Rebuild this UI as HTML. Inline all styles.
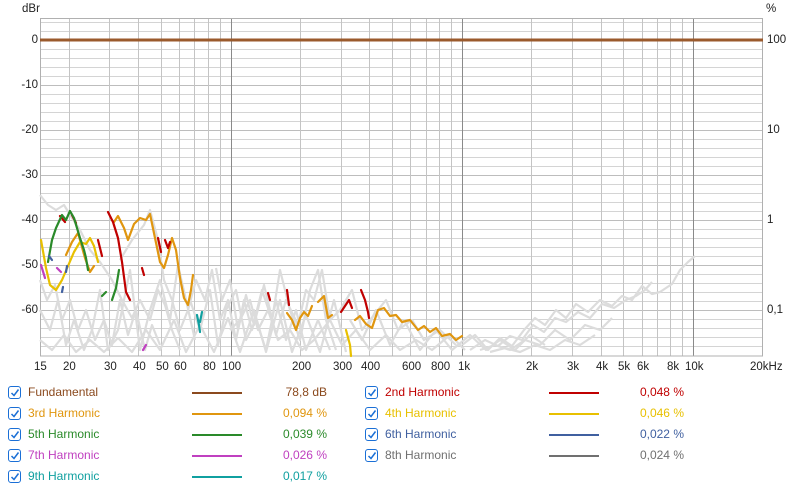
<!DOCTYPE html>
<html><head><meta charset="utf-8"><style>
body{margin:0;width:800px;height:492px;background:#fff;font-family:"Liberation Sans",sans-serif;overflow:hidden;position:relative}
.t{position:absolute;font-size:11.5px;color:#222}
.lg{position:absolute;font-size:12px;height:16px;line-height:16px}
.cb{position:absolute;width:11px;height:11px;border:1.3px solid #1a6fd6;border-radius:3px;background:#fff}
.cb svg{position:absolute;left:1px;top:1px}
.ln{position:absolute;height:2px}
</style></head><body>
<svg width="800" height="492" style="position:absolute;left:0;top:0">
<g stroke="#d4d4d4" stroke-width="1">
<line x1="40" x2="763" y1="22.5" y2="22.5"/><line x1="40" x2="763" y1="31.5" y2="31.5"/>
<line x1="40" x2="763" y1="49.5" y2="49.5"/><line x1="40" x2="763" y1="58.5" y2="58.5"/><line x1="40" x2="763" y1="67.5" y2="67.5"/><line x1="40" x2="763" y1="76.5" y2="76.5"/>
<line x1="40" x2="763" y1="94.5" y2="94.5"/><line x1="40" x2="763" y1="103.5" y2="103.5"/><line x1="40" x2="763" y1="112.5" y2="112.5"/><line x1="40" x2="763" y1="121.5" y2="121.5"/>
<line x1="40" x2="763" y1="139.5" y2="139.5"/><line x1="40" x2="763" y1="148.5" y2="148.5"/><line x1="40" x2="763" y1="157.5" y2="157.5"/><line x1="40" x2="763" y1="166.5" y2="166.5"/>
<line x1="40" x2="763" y1="184.5" y2="184.5"/><line x1="40" x2="763" y1="193.5" y2="193.5"/><line x1="40" x2="763" y1="202.5" y2="202.5"/><line x1="40" x2="763" y1="211.5" y2="211.5"/>
<line x1="40" x2="763" y1="229.5" y2="229.5"/><line x1="40" x2="763" y1="238.5" y2="238.5"/><line x1="40" x2="763" y1="247.5" y2="247.5"/><line x1="40" x2="763" y1="256.5" y2="256.5"/>
<line x1="40" x2="763" y1="274.5" y2="274.5"/><line x1="40" x2="763" y1="283.5" y2="283.5"/><line x1="40" x2="763" y1="292.5" y2="292.5"/><line x1="40" x2="763" y1="301.5" y2="301.5"/>
<line x1="40" x2="763" y1="319.5" y2="319.5"/><line x1="40" x2="763" y1="328.5" y2="328.5"/><line x1="40" x2="763" y1="337.5" y2="337.5"/><line x1="40" x2="763" y1="346.5" y2="346.5"/>
</g>
<g stroke="#bdbdbd" stroke-width="1">
<line x1="40" x2="763" y1="85.5" y2="85.5"/><line x1="40" x2="763" y1="130.5" y2="130.5"/><line x1="40" x2="763" y1="175.5" y2="175.5"/><line x1="40" x2="763" y1="220.5" y2="220.5"/><line x1="40" x2="763" y1="265.5" y2="265.5"/><line x1="40" x2="763" y1="310.5" y2="310.5"/>
</g>
<g stroke="#c4c4c4" stroke-width="1">
<line x1="69.5" x2="69.5" y1="18" y2="356"/><line x1="109.5" x2="109.5" y1="18" y2="356"/><line x1="138.5" x2="138.5" y1="18" y2="356"/><line x1="161.5" x2="161.5" y1="18" y2="356"/><line x1="179.5" x2="179.5" y1="18" y2="356"/><line x1="194.5" x2="194.5" y1="18" y2="356"/><line x1="208.5" x2="208.5" y1="18" y2="356"/><line x1="220.5" x2="220.5" y1="18" y2="356"/>
<line x1="300.5" x2="300.5" y1="18" y2="356"/><line x1="341.5" x2="341.5" y1="18" y2="356"/><line x1="369.5" x2="369.5" y1="18" y2="356"/><line x1="392.5" x2="392.5" y1="18" y2="356"/><line x1="410.5" x2="410.5" y1="18" y2="356"/><line x1="426.5" x2="426.5" y1="18" y2="356"/><line x1="439.5" x2="439.5" y1="18" y2="356"/><line x1="451.5" x2="451.5" y1="18" y2="356"/>
<line x1="531.5" x2="531.5" y1="18" y2="356"/><line x1="572.5" x2="572.5" y1="18" y2="356"/><line x1="601.5" x2="601.5" y1="18" y2="356"/><line x1="623.5" x2="623.5" y1="18" y2="356"/><line x1="642.5" x2="642.5" y1="18" y2="356"/><line x1="657.5" x2="657.5" y1="18" y2="356"/><line x1="670.5" x2="670.5" y1="18" y2="356"/><line x1="682.5" x2="682.5" y1="18" y2="356"/>
</g>
<g stroke="#8a8a8a" stroke-width="1"><line x1="231.5" x2="231.5" y1="18" y2="356"/><line x1="462.5" x2="462.5" y1="18" y2="356"/><line x1="693.5" x2="693.5" y1="18" y2="356"/></g>
<rect x="40.5" y="18.5" width="722" height="337.5" fill="none" stroke="#b0b0b0"/>
<line x1="40" x2="763" y1="40" y2="40" stroke="#9b5a2c" stroke-width="3"/>
<g fill="none" stroke="#dcdcdc" stroke-width="2.2" stroke-linejoin="round">
<path d="M40,195 L48,205 L56,210 L64,205 L72,218 L80,230 L90,250 L100,262 L112,280 L122,300 L132,318 L140,300 L150,320 L158,290 L165,305 L172,330 L180,350"/>
<path d="M40,280 L47,300 L55,285 L62,320 L70,300 L78,330 L86,310 L95,340 L104,320 L112,345 L120,300 L128,335 L136,310 L145,350 L152,325 L160,345"/>
<path d="M40,310 L50,330 L58,300 L66,345 L74,320 L84,350 L92,330 L100,290 L108,350 L118,330 L130,270 L140,350 L150,310 L160,280 L170,320 L178,265 L186,300 L195,340"/>
<path d="M120,260 L132,240 L144,225 L150,210 L158,240 L164,280 L172,300 L180,330 L188,310 L196,280 L205,300 L212,270 L220,320 L228,300 L236,340 L244,300 L252,330 L262,290 L272,320 L280,270 L290,310 L300,340 L310,290 L318,270 L326,320 L336,350"/>
<path d="M190,300 L200,330 L210,290 L218,345 L226,310 L236,290 L246,340 L256,320 L266,350 L276,300 L286,340 L296,310 L306,350 L318,320 L330,350"/>
<path d="M230,330 L240,320 L250,300 L258,330 L268,310 L278,340 L290,330 L302,350 L314,340 L330,320 L342,345 L356,330 L370,350 L386,335 L400,350 L416,340 L432,350 L450,335 L465,350"/>
<path d="M350,320 L362,340 L376,310 L390,345 L404,320 L420,350 L436,330 L452,350 L470,335 L486,350 L500,340 L515,350 L530,335 L545,345"/>
<path d="M40,340 L52,350 L64,335 L76,352 L90,340 L104,352 L118,338 L132,352 L146,330 L160,350 L174,320 L186,352 L200,325 L214,352 L228,318 L240,352 L254,310 L266,352 L280,300 L292,352 L306,315 L320,352 L334,300 L346,352"/>
<path d="M216,268 L222,300 L230,280 L238,330 L246,295 L254,325 L264,285 L276,335 L286,300 L298,325 L306,290 L314,300 L322,270 L330,320 L340,310 L352,290 L362,330 L374,315 L386,300 L398,330 L412,320 L424,340 L440,330 L456,345"/>
<path d="M462,345 L475,335 L488,350 L500,338 L512,346 L524,330 L535,318 L545,325 L556,310 L566,318 L576,304 L588,312 L600,300 L612,306 L622,296 L632,300 L642,286 L652,294 L660,292 L672,284 L680,270 L688,262 L695,256"/>
<path d="M470,350 L485,340 L498,346 L510,336 L522,340 L533,325 L544,332 L555,318 L566,322 L578,312 L590,318 L602,304 L614,308 L626,300 L636,296 L645,290 L652,282"/>
<path d="M480,350 L495,345 L510,350 L525,340 L540,345 L555,330 L570,340 L585,325 L600,330 L612,318"/>
<path d="M490,352 L505,348 L520,352 L535,345 L550,350 L565,340 L580,345 L595,335"/>
</g>
<g fill="none" stroke-width="2.2" stroke-linejoin="round" stroke-linecap="round">
<path stroke="#e0960f" d="M66,255 L72,242 L78,233 L80,240 L85,258 L90,272 L94,266"/>
<path stroke="#e0960f" d="M114,222 L118,216 L124,228 L128,240 L134,224 L140,218 L146,220 L150,214 L155,238 L160,262 L164,268 L168,255 L172,238 L176,250 L180,278 L184,298 L188,305 L191,290 L193,275"/>
<path stroke="#e0960f" d="M287,313 L292,320 L296,330 L300,318 L304,312 L308,316 L312,306"/>
<path stroke="#e0960f" d="M318,302 L324,296 L328,318 L332,315"/>
<path stroke="#e0960f" d="M355,320 L360,316 L366,324 L372,328 L378,310 L384,308 L390,316 L396,315 L402,322 L410,320 L418,330 L424,326 L430,332 L436,328 L442,336 L450,334 L456,340 L462,336"/>
<path stroke="#e8c000" d="M41,240 L46,268 L50,285 L56,290 L62,280 L68,266 L74,252 L80,242 L86,244 L90,238 L94,246 L98,262"/>
<path stroke="#e8c000" d="M346,330 L350,345 L351,356"/>
<path stroke="#c00000" d="M60,216 L65,222 M72,215 L76,223 M98,240 L102,256 M108,212 L113,222 L118,238 L122,262 L126,292 L130,300 M142,268 L144,275 M158,238 L161,252 M165,240 L168,248 L170,242"/>
<path stroke="#c00000" d="M268,293 L270,300 M287,290 L289,305 M341,312 L345,306 L349,300 L352,308 M361,290 L365,300 L368,312 L369,318"/>
<path stroke="#2a8a2a" d="M48,262 L52,240 L56,228 L62,215 L66,220 L70,211 L74,218 L77,228 L80,238 L84,250 L86,258 L88,270 M102,296 L106,292 M112,300 L116,288 L119,270"/>
<path stroke="#4060a0" d="M49,256 L52,260 M62,292 L63,287 M66,272 L67,266"/>
<path stroke="#c040c0" d="M41,265 L45,278 M57,268 L61,272 M143,350 L146,345"/>
<path stroke="#10a0a0" d="M197,315 L199,325 L200,332 M202,312 L200,322"/>
</g>
</svg>
<div class="t" style="left:22px;top:3px">dBr</div>
<div class="t" style="left:766px;top:3px">%</div>
<div class="t" style="left:0;width:38px;text-align:right;top:34px">0</div>
<div class="t" style="left:0;width:38px;text-align:right;top:79px">-10</div>
<div class="t" style="left:0;width:38px;text-align:right;top:124px">-20</div>
<div class="t" style="left:0;width:38px;text-align:right;top:169px">-30</div>
<div class="t" style="left:0;width:38px;text-align:right;top:214px">-40</div>
<div class="t" style="left:0;width:38px;text-align:right;top:259px">-50</div>
<div class="t" style="left:0;width:38px;text-align:right;top:304px">-60</div>
<div class="t" style="left:767px;top:34px">100</div>
<div class="t" style="left:767px;top:124px">10</div>
<div class="t" style="left:767px;top:214px">1</div>
<div class="t" style="left:767px;top:304px">0,1</div>
<div class="t" style="left:34px;top:361px">15</div>
<div class="t" style="left:63px;top:361px">20</div>
<div class="t" style="left:104px;top:361px">30</div>
<div class="t" style="left:133px;top:361px">40</div>
<div class="t" style="left:156px;top:361px">50</div>
<div class="t" style="left:174px;top:361px">60</div>
<div class="t" style="left:203px;top:361px">80</div>
<div class="t" style="left:222px;top:361px">100</div>
<div class="t" style="left:292px;top:361px">200</div>
<div class="t" style="left:333px;top:361px">300</div>
<div class="t" style="left:361px;top:361px">400</div>
<div class="t" style="left:402px;top:361px">600</div>
<div class="t" style="left:431px;top:361px">800</div>
<div class="t" style="left:458px;top:361px">1k</div>
<div class="t" style="left:526px;top:361px">2k</div>
<div class="t" style="left:567px;top:361px">3k</div>
<div class="t" style="left:596px;top:361px">4k</div>
<div class="t" style="left:618px;top:361px">5k</div>
<div class="t" style="left:637px;top:361px">6k</div>
<div class="t" style="left:667px;top:361px">8k</div>
<div class="t" style="left:685px;top:361px">10k</div>
<div class="t" style="left:750px;top:361px">20kHz</div>

<div class="cb" style="left:8px;top:386px"><svg width="10" height="10"><path d="M1.5,5 L4,7.5 L8.5,1.5" fill="none" stroke="#1a6fd6" stroke-width="1.5"/></svg></div>
<div class="lg" style="left:28px;top:384px;color:#8b4a1e">Fundamental</div>
<div class="ln" style="left:192px;top:392px;width:50px;background:#8b4a1e"></div>
<div class="lg" style="left:250px;width:77px;text-align:right;top:384px;color:#8b4a1e">78,8 dB</div>

<div class="cb" style="left:8px;top:407px"><svg width="10" height="10"><path d="M1.5,5 L4,7.5 L8.5,1.5" fill="none" stroke="#1a6fd6" stroke-width="1.5"/></svg></div>
<div class="lg" style="left:28px;top:405px;color:#e0960f">3rd Harmonic</div>
<div class="ln" style="left:192px;top:413px;width:50px;background:#e0960f"></div>
<div class="lg" style="left:250px;width:77px;text-align:right;top:405px;color:#e0960f">0,094 %</div>

<div class="cb" style="left:8px;top:428px"><svg width="10" height="10"><path d="M1.5,5 L4,7.5 L8.5,1.5" fill="none" stroke="#1a6fd6" stroke-width="1.5"/></svg></div>
<div class="lg" style="left:28px;top:426px;color:#2a8a2a">5th Harmonic</div>
<div class="ln" style="left:192px;top:434px;width:50px;background:#2a8a2a"></div>
<div class="lg" style="left:250px;width:77px;text-align:right;top:426px;color:#2a8a2a">0,039 %</div>

<div class="cb" style="left:8px;top:449px"><svg width="10" height="10"><path d="M1.5,5 L4,7.5 L8.5,1.5" fill="none" stroke="#1a6fd6" stroke-width="1.5"/></svg></div>
<div class="lg" style="left:28px;top:447px;color:#c040c0">7th Harmonic</div>
<div class="ln" style="left:192px;top:455px;width:50px;background:#c040c0"></div>
<div class="lg" style="left:250px;width:77px;text-align:right;top:447px;color:#c040c0">0,026 %</div>

<div class="cb" style="left:8px;top:470px"><svg width="10" height="10"><path d="M1.5,5 L4,7.5 L8.5,1.5" fill="none" stroke="#1a6fd6" stroke-width="1.5"/></svg></div>
<div class="lg" style="left:28px;top:468px;color:#10a0a0">9th Harmonic</div>
<div class="ln" style="left:192px;top:476px;width:50px;background:#10a0a0"></div>
<div class="lg" style="left:250px;width:77px;text-align:right;top:468px;color:#10a0a0">0,017 %</div>

<div class="cb" style="left:365px;top:386px"><svg width="10" height="10"><path d="M1.5,5 L4,7.5 L8.5,1.5" fill="none" stroke="#1a6fd6" stroke-width="1.5"/></svg></div>
<div class="lg" style="left:385px;top:384px;color:#c00000">2nd Harmonic</div>
<div class="ln" style="left:549px;top:392px;width:50px;background:#c00000"></div>
<div class="lg" style="left:607px;width:77px;text-align:right;top:384px;color:#c00000">0,048 %</div>

<div class="cb" style="left:365px;top:407px"><svg width="10" height="10"><path d="M1.5,5 L4,7.5 L8.5,1.5" fill="none" stroke="#1a6fd6" stroke-width="1.5"/></svg></div>
<div class="lg" style="left:385px;top:405px;color:#e8c000">4th Harmonic</div>
<div class="ln" style="left:549px;top:413px;width:50px;background:#e8c000"></div>
<div class="lg" style="left:607px;width:77px;text-align:right;top:405px;color:#e8c000">0,046 %</div>

<div class="cb" style="left:365px;top:428px"><svg width="10" height="10"><path d="M1.5,5 L4,7.5 L8.5,1.5" fill="none" stroke="#1a6fd6" stroke-width="1.5"/></svg></div>
<div class="lg" style="left:385px;top:426px;color:#4060a0">6th Harmonic</div>
<div class="ln" style="left:549px;top:434px;width:50px;background:#4060a0"></div>
<div class="lg" style="left:607px;width:77px;text-align:right;top:426px;color:#4060a0">0,022 %</div>

<div class="cb" style="left:365px;top:449px"><svg width="10" height="10"><path d="M1.5,5 L4,7.5 L8.5,1.5" fill="none" stroke="#1a6fd6" stroke-width="1.5"/></svg></div>
<div class="lg" style="left:385px;top:447px;color:#707070">8th Harmonic</div>
<div class="ln" style="left:549px;top:455px;width:50px;background:#707070"></div>
<div class="lg" style="left:607px;width:77px;text-align:right;top:447px;color:#707070">0,024 %</div>
</body></html>
